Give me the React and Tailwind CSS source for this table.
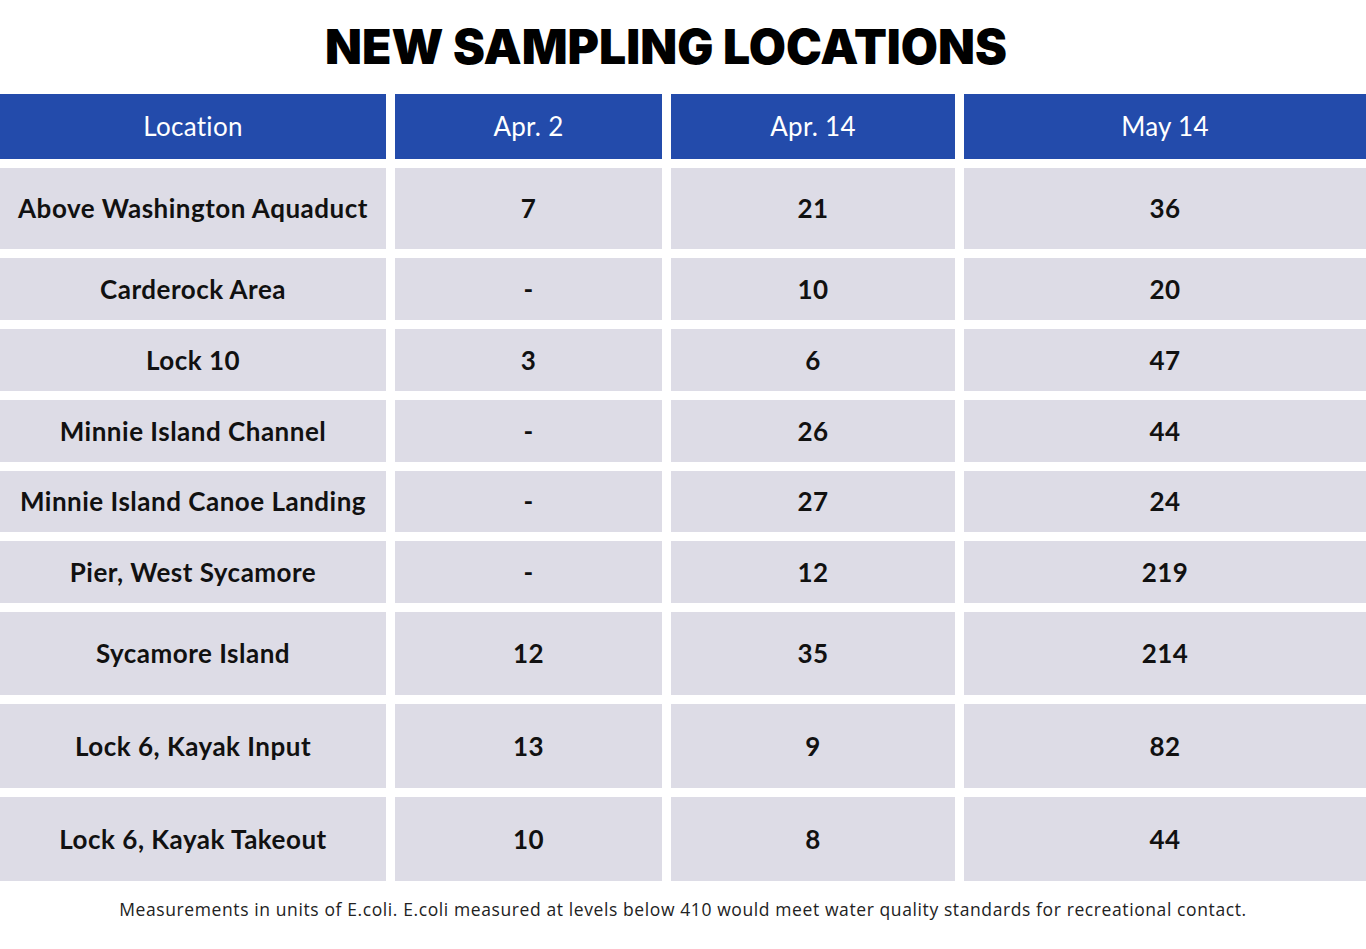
import React from "react";

const rows = [
  { h: "h-[81px]", loc: "Above Washington Aquaduct", a: "7", b: "21", c: "36" },
  { h: "h-[62px]", loc: "Carderock Area", a: "-", b: "10", c: "20" },
  { h: "h-[62px]", loc: "Lock 10", a: "3", b: "6", c: "47" },
  { h: "h-[62px]", loc: "Minnie Island Channel", a: "-", b: "26", c: "44" },
  { h: "h-[61px]", loc: "Minnie Island Canoe Landing", a: "-", b: "27", c: "24" },
  { h: "h-[62px]", loc: "Pier, West Sycamore", a: "-", b: "12", c: "219" },
  { h: "h-[83px]", loc: "Sycamore Island", a: "12", b: "35", c: "214" },
  { h: "h-[84px]", loc: "Lock 6, Kayak Input", a: "13", b: "9", c: "82" },
  { h: "h-[84px]", loc: "Lock 6, Kayak Takeout", a: "10", b: "8", c: "44" },
];

function Cell({ children, h }) {
  return (
    <div className={`${h} bg-[#dddce6] flex items-center justify-center text-[26px] font-bold tracking-[0.5px] text-[#111]`}>
      {children}
    </div>
  );
}

export default function App() {
  return (
    <div className="w-[1366px] h-[949px] bg-white overflow-hidden" style={{ fontFamily: "Lato, 'Noto Sans', sans-serif" }}>
      <div className="h-[94px] flex items-center justify-center pr-[34px]">
        <h1 className="text-[48px] leading-none font-black text-black tracking-[0px]" style={{ fontFamily: "Inter, Lato, sans-serif" }}>
          NEW SAMPLING LOCATIONS
        </h1>
      </div>
      <div className="grid grid-cols-[386px_267px_284px_402px] gap-x-[9px] gap-y-[9px]">
        {["Location", "Apr. 2", "Apr. 14", "May 14"].map((t) => (
          <div key={t} className="h-[65px] bg-[#234bab] flex items-center justify-center text-white text-[26px] tracking-[0.3px] font-normal">
            {t}
          </div>
        ))}
        {rows.map((r) => (
          <React.Fragment key={r.loc}>
            <Cell h={r.h}>{r.loc}</Cell>
            <Cell h={r.h}>{r.a}</Cell>
            <Cell h={r.h}>{r.b}</Cell>
            <Cell h={r.h}>{r.c}</Cell>
          </React.Fragment>
        ))}
      </div>
      <div className="h-[68px] flex justify-center pt-[19px]">
        <p className="text-[17.5px] leading-[18px] tracking-[0.6px] text-[#222]" style={{ fontFamily: "'Open Sans', sans-serif" }}>
          Measurements in units of E.coli. E.coli measured at levels below 410 would meet water quality standards for recreational contact.
        </p>
      </div>
    </div>
  );
}
